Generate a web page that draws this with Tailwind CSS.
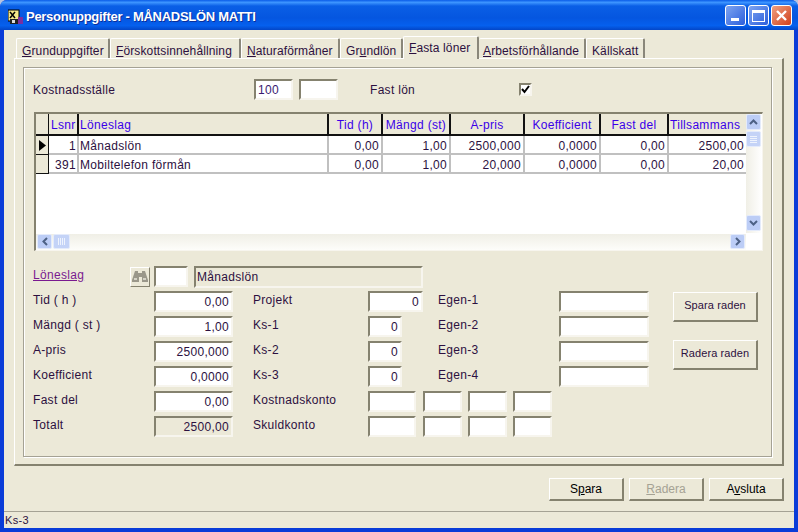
<!DOCTYPE html>
<html lang="sv">
<head>
<meta charset="UTF-8">
<title>Personuppgifter</title>
<script src="https://cdn.jsdelivr.net/npm/@tailwindcss/browser@4"></script>
</head>
<body class="m-0 overflow-hidden bg-[#b8c4e0]">
<div class="w-[798px] h-[532px] flex flex-col overflow-hidden font-['Liberation_Sans',sans-serif] text-[12px] tracking-[0.3px] text-[#2c1040] rounded-t-[7px] bg-[#0a3cd8]">

  <!-- title bar -->
  <div class="h-[30px] shrink-0 flex items-center pt-[3px] pl-[8px] pr-[6px] bg-[linear-gradient(180deg,#0a5ce8_0%,#3d95ff_8%,#0a5fe6_20%,#0556e0_60%,#0560ee_85%,#0346c8_100%)]">
    <svg class="w-[15px] h-[16px] mr-[3px]" viewBox="0 0 15 16">
      <rect x="0" y="1" width="11" height="11" fill="#f4e88a" stroke="#000"/>
      <path d="M2 3l5 6M7 3l-5 6" stroke="#000" stroke-width="1.5"/>
      <rect x="2" y="10" width="9" height="5" fill="#222"/>
      <rect x="10" y="8" width="5" height="7" fill="#7a2fa0"/>
      <rect x="4" y="11" width="3" height="3" fill="#ddd"/>
    </svg>
    <span class="font-bold text-[13px] tracking-[-0.28px] text-white [text-shadow:1px_1px_0_#0a2f9a]">Personuppgifter - MÅNADSLÖN MATTI</span>
    <div class="ml-auto mt-[-2px] flex gap-[2px]">
      <div class="w-[21px] h-[21px] rounded-[3px] border border-white bg-[linear-gradient(135deg,#7ea4f0,#2c5fdc)] flex items-end pl-[5px] pb-[4px]"><div class="w-[8px] h-[3px] bg-white"></div></div>
      <div class="w-[21px] h-[21px] rounded-[3px] border border-white bg-[linear-gradient(135deg,#7ea4f0,#2c5fdc)] flex items-center justify-center"><div class="w-[13px] h-[12px] border border-white border-t-[3px]"></div></div>
      <div class="w-[21px] h-[21px] rounded-[3px] border border-white bg-[linear-gradient(135deg,#f0a080,#d0401c)] flex items-center justify-center">
        <svg class="w-[13px] h-[13px]" viewBox="0 0 13 13"><path d="M2 2l9 9M11 2l-9 9" stroke="#fff" stroke-width="2.4"/></svg>
      </div>
    </div>
  </div>

  <!-- client area -->
  <div class="relative flex-1 mx-[4px] mb-[4px] bg-[#ece9d8] flex flex-col">
    <div class="pl-[10px] pr-[10px] pt-[6px]">

      <!-- tabs -->
      <div class="relative z-10 h-[22px] flex items-end pl-[2px] tracking-[0.12px]">
        <div class="h-[20px] w-[94px] pl-[5px] pt-[3px] border-t border-l border-r-2 border-t-white border-l-white border-r-[#8a877a] rounded-t-[2px] whitespace-nowrap"><u>G</u>runduppgifter</div>
        <div class="h-[20px] w-[131px] pl-[5px] pt-[3px] border-t border-l border-r-2 border-t-white border-l-white border-r-[#8a877a] rounded-t-[2px] whitespace-nowrap"><u>F</u>örskottsinnehållning</div>
        <div class="h-[20px] w-[99px] pl-[5px] pt-[3px] border-t border-l border-r-2 border-t-white border-l-white border-r-[#8a877a] rounded-t-[2px] whitespace-nowrap"><u>N</u>aturaförmåner</div>
        <div class="h-[20px] w-[63px] pl-[5px] pt-[3px] border-t border-l border-r-2 border-t-white border-l-white border-r-[#8a877a] rounded-t-[2px] whitespace-nowrap">Gr<u>u</u>ndlön</div>
        <div class="h-[23px] w-[76px] pl-[5px] pt-[2px] mb-[-1px] bg-[#ece9d8] border-t border-l border-r-2 border-t-white border-l-white border-r-[#8a877a] rounded-t-[2px] whitespace-nowrap"><u>F</u>asta löner</div>
        <div class="h-[20px] w-[107px] pl-[4px] pt-[3px] border-t border-r-2 border-t-white border-r-[#8a877a] rounded-t-[2px] whitespace-nowrap"><u>A</u>rbetsförhållande</div>
        <div class="h-[20px] w-[59px] pl-[5px] pt-[3px] border-t border-l border-r-2 border-t-white border-l-white border-r-[#8a877a] rounded-t-[2px] whitespace-nowrap">Källskatt</div>
      </div>

      <!-- tab panel -->
      <div class="h-[408px] w-[770px] p-[8px] border border-t-white border-l-white border-r-2 border-b-2 border-r-[#85826f] border-b-[#85826f]">
        <div class="h-[390px] w-[749px] pt-[11px] pl-[9px] border border-[#a5a294] shadow-[1px_1px_0_#fff,inset_1px_1px_0_#fff]">

          <!-- top row -->
          <div class="h-[21px] flex items-center">
            <span class="w-[221px]">Kostnadsställe</span>
            <div class="w-[39px] h-[21px] pl-[2px] bg-white border-2 border-t-[#85826f] border-l-[#85826f] border-r-[#f7f5ee] border-b-[#f7f5ee] leading-[18px] text-[#3a1a70]">100</div>
            <div class="w-[39px] h-[21px] ml-[6px] bg-white border-2 border-t-[#85826f] border-l-[#85826f] border-r-[#f7f5ee] border-b-[#f7f5ee]"></div>
            <span class="w-[148px] ml-[32px]">Fast lön</span>
            <div class="w-[13px] h-[13px] ml-[1px] bg-white border-2 border-t-[#85826f] border-l-[#85826f] border-r-[#f7f5ee] border-b-[#f7f5ee] flex items-center justify-center">
              <svg class="w-[9px] h-[9px]" viewBox="0 0 9 9"><path d="M1 4l2.5 3L8 1" fill="none" stroke="#000" stroke-width="2"/></svg>
            </div>
          </div>

          <!-- grid -->
          <div class="mt-[12px] ml-[1px] w-[729px] h-[139px] flex flex-wrap bg-white border border-t-2 border-l-2 border-t-[#85826f] border-l-[#85826f] border-r-[#f7f5ee] border-b-[#f7f5ee]">
            <div class="w-[710px] h-[119px]">
              <div class="grid grid-cols-[13px_30px_250px_54px_68px_74px_76px_68px_77px] grid-rows-[22px_19px_19px]">
                <div class="bg-[#ece9d8] border-b-2 border-r border-[#111]"></div>
                <div class="bg-[#ece9d8] border-b-2 border-r-2 border-[#111] text-[#3a00e8] pl-[2px] leading-[22px]">Lsnr</div>
                <div class="bg-[#ece9d8] border-b-2 border-r-2 border-[#111] text-[#3a00e8] pl-[1px] leading-[22px]">Löneslag</div>
                <div class="bg-[#ece9d8] border-b-2 border-r-2 border-[#111] text-[#3a00e8] text-center leading-[22px]">Tid (h)</div>
                <div class="bg-[#ece9d8] border-b-2 border-r-2 border-[#111] text-[#3a00e8] text-center leading-[22px]">Mängd (st)</div>
                <div class="bg-[#ece9d8] border-b-2 border-r-2 border-[#111] text-[#3a00e8] text-center leading-[22px]">A-pris</div>
                <div class="bg-[#ece9d8] border-b-2 border-r-2 border-[#111] text-[#3a00e8] text-center leading-[22px]">Koefficient</div>
                <div class="bg-[#ece9d8] border-b-2 border-r-2 border-[#111] text-[#3a00e8] text-center leading-[22px]">Fast del</div>
                <div class="bg-[#ece9d8] border-b-2 border-[#111] text-[#3a00e8] pl-[1px] leading-[22px] whitespace-nowrap">Tillsammans</div>

                <div class="bg-[#ece9d8] border-b border-r border-[#111] flex items-center pl-[3px]"><svg class="w-[7px] h-[11px]" viewBox="0 0 7 11"><path d="M0 0l7 5.5L0 11z" fill="#000"/></svg></div>
                <div class="border-b-2 border-r-2 border-[#c0c0c0] text-right pr-[1px] leading-[20px]">1</div>
                <div class="border-b-2 border-r-2 border-[#c0c0c0] pl-[1px] leading-[20px]">Månadslön</div>
                <div class="border-b-2 border-r-2 border-[#c0c0c0] text-right pr-[2px] leading-[20px]">0,00</div>
                <div class="border-b-2 border-r-2 border-[#c0c0c0] text-right pr-[2px] leading-[20px]">1,00</div>
                <div class="border-b-2 border-r-2 border-[#c0c0c0] text-right pr-[2px] leading-[20px]">2500,000</div>
                <div class="border-b-2 border-r-2 border-[#c0c0c0] text-right pr-[2px] leading-[20px]">0,0000</div>
                <div class="border-b-2 border-r-2 border-[#c0c0c0] text-right pr-[2px] leading-[20px]">0,00</div>
                <div class="border-b-2 border-[#c0c0c0] text-right pr-[2px] leading-[20px]">2500,00</div>

                <div class="bg-[#ece9d8] border-b border-r border-[#111]"></div>
                <div class="border-b-2 border-r-2 border-[#c0c0c0] text-right pr-[1px] leading-[20px]">391</div>
                <div class="border-b-2 border-r-2 border-[#c0c0c0] pl-[1px] leading-[20px]">Mobiltelefon förmån</div>
                <div class="border-b-2 border-r-2 border-[#c0c0c0] text-right pr-[2px] leading-[20px]">0,00</div>
                <div class="border-b-2 border-r-2 border-[#c0c0c0] text-right pr-[2px] leading-[20px]">1,00</div>
                <div class="border-b-2 border-r-2 border-[#c0c0c0] text-right pr-[2px] leading-[20px]">20,000</div>
                <div class="border-b-2 border-r-2 border-[#c0c0c0] text-right pr-[2px] leading-[20px]">0,0000</div>
                <div class="border-b-2 border-r-2 border-[#c0c0c0] text-right pr-[2px] leading-[20px]">0,00</div>
                <div class="border-b-2 border-[#c0c0c0] text-right pr-[2px] leading-[20px]">20,00</div>
              </div>
            </div>

            <!-- vertical scrollbar -->
            <div class="w-[16px] h-[119px] flex flex-col bg-[linear-gradient(90deg,#f0efe6,#fff)]">
              <div class="w-[15px] h-[16px] rounded-[2px] bg-[#bccdf6] border border-[#e4ebfb] flex items-center justify-center"><svg class="w-[9px] h-[6px]" viewBox="0 0 9 6"><path d="M1 5l3.5-3.5L8 5" fill="none" stroke="#4d6185" stroke-width="2"/></svg></div>
              <div class="w-[15px] h-[16px] mt-[1px] rounded-[2px] bg-[#c4d3f7] border border-[#e4ebfb] flex flex-col items-center justify-center gap-[1px]"><div class="w-[7px] h-px bg-[#eef3fd]"></div><div class="w-[7px] h-px bg-[#eef3fd]"></div><div class="w-[7px] h-px bg-[#eef3fd]"></div><div class="w-[7px] h-px bg-[#eef3fd]"></div></div>
              <div class="w-[15px] h-[16px] mt-auto mb-[2px] rounded-[2px] bg-[#bccdf6] border border-[#e4ebfb] flex items-center justify-center"><svg class="w-[9px] h-[6px]" viewBox="0 0 9 6"><path d="M1 1l3.5 3.5L8 1" fill="none" stroke="#4d6185" stroke-width="2"/></svg></div>
            </div>

            <!-- horizontal scrollbar -->
            <div class="w-[710px] h-[16px] flex items-center bg-[linear-gradient(180deg,#f0efe6,#fdfdfa)]">
              <div class="w-[15px] h-[15px] ml-[1px] rounded-[2px] bg-[#bccdf6] border border-[#e4ebfb] flex items-center justify-center"><svg class="w-[6px] h-[9px]" viewBox="0 0 6 9"><path d="M5 1L1.5 4.5 5 8" fill="none" stroke="#4d6185" stroke-width="2"/></svg></div>
              <div class="w-[17px] h-[15px] ml-[1px] rounded-[2px] bg-[#c4d3f7] border border-[#e4ebfb] flex items-center justify-center gap-[1px]"><div class="w-px h-[7px] bg-[#eef3fd]"></div><div class="w-px h-[7px] bg-[#eef3fd]"></div><div class="w-px h-[7px] bg-[#eef3fd]"></div><div class="w-px h-[7px] bg-[#eef3fd]"></div></div>
              <div class="w-[15px] h-[15px] ml-auto mr-[1px] rounded-[2px] bg-[#bccdf6] border border-[#e4ebfb] flex items-center justify-center"><svg class="w-[6px] h-[9px]" viewBox="0 0 6 9"><path d="M1 1l3.5 3.5L1 8" fill="none" stroke="#4d6185" stroke-width="2"/></svg></div>
            </div>
          </div>

          <!-- form -->
          <div class="mt-[15px] flex">
            <div class="w-[640px] flex flex-col gap-[4px] [&_span]:pb-[4px]">
              <div class="h-[21px] flex items-center">
                <span class="w-[97px] underline text-[#7a1a90]">Löneslag</span>
                <div class="w-[20px] h-[20px] border border-t-white border-l-white border-r-[#85826f] border-b-[#85826f] flex items-center justify-center">
                  <svg class="w-[16px] h-[13px]" viewBox="0 0 16 13"><path d="M3 1h3v2h4V1h3l3 9v2h-6V7H7v5H0v-2z" fill="#9a978a"/><path d="M2 9h3M11 9h3" stroke="#e8e6da" stroke-width="1.5"/></svg>
                </div>
                <div class="w-[34px] h-[21px] ml-[4px] bg-white border-2 border-t-[#85826f] border-l-[#85826f] border-r-[#f7f5ee] border-b-[#f7f5ee]"></div>
                <div class="w-[229px] h-[22px] ml-[6px] pl-[1px] leading-[18px] border-2 border-t-[#85826f] border-l-[#85826f] border-r-[#f7f5ee] border-b-[#f7f5ee]">Månadslön</div>
              </div>

              <div class="h-[21px] flex items-center">
                <span class="w-[121px]">Tid ( h )</span>
                <div class="w-[79px] h-[21px] pr-[2px] text-right leading-[18px] bg-white border-2 border-t-[#85826f] border-l-[#85826f] border-r-[#f7f5ee] border-b-[#f7f5ee]">0,00</div>
                <span class="w-[115px] ml-[20px]">Projekt</span>
                <div class="w-[55px] h-[21px] pr-[2px] text-right leading-[18px] bg-white border-2 border-t-[#85826f] border-l-[#85826f] border-r-[#f7f5ee] border-b-[#f7f5ee]">0</div>
                <span class="w-[121px] ml-[15px]">Egen-1</span>
                <div class="w-[90px] h-[21px] bg-white border-2 border-t-[#85826f] border-l-[#85826f] border-r-[#f7f5ee] border-b-[#f7f5ee]"></div>
              </div>
              <div class="h-[21px] flex items-center">
                <span class="w-[121px]">Mängd ( st )</span>
                <div class="w-[79px] h-[21px] pr-[2px] text-right leading-[18px] bg-white border-2 border-t-[#85826f] border-l-[#85826f] border-r-[#f7f5ee] border-b-[#f7f5ee]">1,00</div>
                <span class="w-[115px] ml-[20px]">Ks-1</span>
                <div class="w-[34px] h-[21px] pr-[2px] text-right leading-[18px] bg-white border-2 border-t-[#85826f] border-l-[#85826f] border-r-[#f7f5ee] border-b-[#f7f5ee]">0</div>
                <span class="w-[121px] ml-[36px]">Egen-2</span>
                <div class="w-[90px] h-[21px] bg-white border-2 border-t-[#85826f] border-l-[#85826f] border-r-[#f7f5ee] border-b-[#f7f5ee]"></div>
              </div>
              <div class="h-[21px] flex items-center">
                <span class="w-[121px]">A-pris</span>
                <div class="w-[79px] h-[21px] pr-[2px] text-right leading-[18px] bg-white border-2 border-t-[#85826f] border-l-[#85826f] border-r-[#f7f5ee] border-b-[#f7f5ee]">2500,000</div>
                <span class="w-[115px] ml-[20px]">Ks-2</span>
                <div class="w-[34px] h-[21px] pr-[2px] text-right leading-[18px] bg-white border-2 border-t-[#85826f] border-l-[#85826f] border-r-[#f7f5ee] border-b-[#f7f5ee]">0</div>
                <span class="w-[121px] ml-[36px]">Egen-3</span>
                <div class="w-[90px] h-[21px] bg-white border-2 border-t-[#85826f] border-l-[#85826f] border-r-[#f7f5ee] border-b-[#f7f5ee]"></div>
              </div>
              <div class="h-[21px] flex items-center">
                <span class="w-[121px]">Koefficient</span>
                <div class="w-[79px] h-[21px] pr-[2px] text-right leading-[18px] bg-white border-2 border-t-[#85826f] border-l-[#85826f] border-r-[#f7f5ee] border-b-[#f7f5ee]">0,0000</div>
                <span class="w-[115px] ml-[20px]">Ks-3</span>
                <div class="w-[34px] h-[21px] pr-[2px] text-right leading-[18px] bg-white border-2 border-t-[#85826f] border-l-[#85826f] border-r-[#f7f5ee] border-b-[#f7f5ee]">0</div>
                <span class="w-[121px] ml-[36px]">Egen-4</span>
                <div class="w-[90px] h-[21px] bg-white border-2 border-t-[#85826f] border-l-[#85826f] border-r-[#f7f5ee] border-b-[#f7f5ee]"></div>
              </div>
              <div class="h-[21px] flex items-center">
                <span class="w-[121px]">Fast del</span>
                <div class="w-[79px] h-[21px] pr-[2px] text-right leading-[18px] bg-white border-2 border-t-[#85826f] border-l-[#85826f] border-r-[#f7f5ee] border-b-[#f7f5ee]">0,00</div>
                <span class="w-[115px] ml-[20px]">Kostnadskonto</span>
                <div class="w-[48px] h-[21px] bg-white border-2 border-t-[#85826f] border-l-[#85826f] border-r-[#f7f5ee] border-b-[#f7f5ee]"></div>
                <div class="w-[39px] h-[21px] ml-[7px] bg-white border-2 border-t-[#85826f] border-l-[#85826f] border-r-[#f7f5ee] border-b-[#f7f5ee]"></div>
                <div class="w-[39px] h-[21px] ml-[6px] bg-white border-2 border-t-[#85826f] border-l-[#85826f] border-r-[#f7f5ee] border-b-[#f7f5ee]"></div>
                <div class="w-[39px] h-[21px] ml-[6px] bg-white border-2 border-t-[#85826f] border-l-[#85826f] border-r-[#f7f5ee] border-b-[#f7f5ee]"></div>
              </div>
              <div class="h-[21px] flex items-center">
                <span class="w-[121px]">Totalt</span>
                <div class="w-[79px] h-[21px] pr-[2px] text-right leading-[18px] border-2 border-t-[#85826f] border-l-[#85826f] border-r-[#f7f5ee] border-b-[#f7f5ee]">2500,00</div>
                <span class="w-[115px] ml-[20px]">Skuldkonto</span>
                <div class="w-[48px] h-[21px] bg-white border-2 border-t-[#85826f] border-l-[#85826f] border-r-[#f7f5ee] border-b-[#f7f5ee]"></div>
                <div class="w-[39px] h-[21px] ml-[7px] bg-white border-2 border-t-[#85826f] border-l-[#85826f] border-r-[#f7f5ee] border-b-[#f7f5ee]"></div>
                <div class="w-[39px] h-[21px] ml-[6px] bg-white border-2 border-t-[#85826f] border-l-[#85826f] border-r-[#f7f5ee] border-b-[#f7f5ee]"></div>
                <div class="w-[39px] h-[21px] ml-[6px] bg-white border-2 border-t-[#85826f] border-l-[#85826f] border-r-[#f7f5ee] border-b-[#f7f5ee]"></div>
              </div>
            </div>

            <div class="pt-[26px] flex flex-col gap-[18px]">
              <div class="w-[85px] h-[30px] text-center text-[11px] tracking-[0.1px] leading-[25px] border border-t-white border-l-white border-r-2 border-b-2 border-r-[#85826f] border-b-[#85826f]">Spara raden</div>
              <div class="w-[85px] h-[30px] text-center text-[11px] tracking-[0.1px] leading-[25px] border border-t-white border-l-white border-r-2 border-b-2 border-r-[#85826f] border-b-[#85826f]">Radera raden</div>
            </div>
          </div>
        </div>
      </div>

      <!-- bottom buttons -->
      <div class="mt-[12px] w-[770px] flex justify-end gap-[5px] tracking-normal">
        <div class="w-[75px] h-[23px] text-center leading-[20px] text-black border border-t-white border-l-white border-r-2 border-b-2 border-r-[#85826f] border-b-[#85826f]">S<u>p</u>ara</div>
        <div class="w-[75px] h-[23px] text-center leading-[20px] text-[#a5a294] border border-t-white border-l-white border-r-2 border-b-2 border-r-[#85826f] border-b-[#85826f]"><u>R</u>adera</div>
        <div class="w-[75px] h-[23px] text-center leading-[20px] text-black border border-t-white border-l-white border-r-2 border-b-2 border-r-[#85826f] border-b-[#85826f]">A<u>v</u>sluta</div>
      </div>
    </div>

    <!-- status bar -->
    <div class="mt-auto h-[17px] pl-[1px] leading-[17px] text-[11px] border-t border-[#a5a294]">Ks-3</div>
  </div>
</div>
</body>
</html>
